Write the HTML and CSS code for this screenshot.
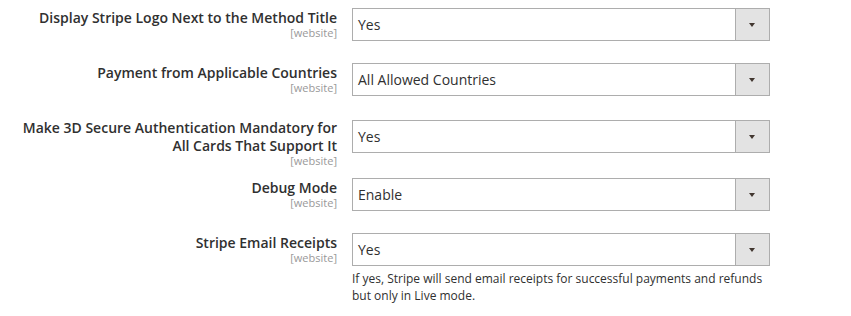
FILE: index.html
```html
<!DOCTYPE html>
<html lang="en">
<head>
<meta charset="utf-8">
<title>Stripe settings</title>
<link rel="stylesheet" href="styles.css">
</head>
<body>
<div class="config">
  <div class="row">
    <div class="label"><span class="title">Display Stripe Logo Next to the Method Title</span><span class="scope">[website]</span></div>
    <div class="control"><div class="select"><span class="value">Yes</span><span class="arrow"></span></div></div>
  </div>
  <div class="row">
    <div class="label"><span class="title">Payment from Applicable Countries</span><span class="scope">[website]</span></div>
    <div class="control"><div class="select"><span class="value">All Allowed Countries</span><span class="arrow"></span></div></div>
  </div>
  <div class="row row-tall">
    <div class="label"><span class="title">Make 3D Secure Authentication Mandatory for All Cards That Support It</span><span class="scope">[website]</span></div>
    <div class="control control-low"><div class="select"><span class="value">Yes</span><span class="arrow"></span></div></div>
  </div>
  <div class="row">
    <div class="label"><span class="title">Debug Mode</span><span class="scope">[website]</span></div>
    <div class="control"><div class="select"><span class="value">Enable</span><span class="arrow"></span></div></div>
  </div>
  <div class="row">
    <div class="label"><span class="title">Stripe Email Receipts</span><span class="scope">[website]</span></div>
    <div class="control">
      <div class="select"><span class="value">Yes</span><span class="arrow"></span></div>
      <p class="note">If yes, Stripe will send email receipts for successful payments and refunds but only in Live mode.</p>
    </div>
  </div>
</div>
</body>
</html>
```
FILE: styles.css
```css
html, body {
  margin: 0;
  padding: 0;
  background: #ffffff;
}
body {
  font-family: "Open Sans", "Liberation Sans", sans-serif;
  color: #303030;
}
.config {
  padding-top: 8px;
}
.row {
  display: flex;
  align-items: flex-start;
  margin-bottom: 22px;
}
.row-tall {
  margin-bottom: 23px;
}
.label {
  box-sizing: border-box;
  width: 337px;
  padding-left: 20px;
  flex: none;
  text-align: right;
  padding-top: 1px;
}
.title {
  display: block;
  font-size: 14px;
  font-weight: 600;
  line-height: 18px;
  color: #303030;
}
.scope {
  display: block;
  font-size: 11px;
  font-weight: 400;
  line-height: 12px;
  color: #999999;
  margin-bottom: -12px;
}
.control {
  margin-left: 15px;
  width: 418px;
  flex: none;
}
.control-low {
  padding-top: 2px;
}
.select {
  box-sizing: border-box;
  height: 33px;
  border: 1px solid #adadad;
  display: flex;
  align-items: stretch;
  background: #ffffff;
}
.value {
  flex: 1;
  padding-left: 5px;
  font-size: 14px;
  line-height: 31px;
  color: #303030;
}
.arrow {
  width: 33px;
  flex: none;
  background: #e3e3e3;
  border-left: 1px solid #adadad;
  position: relative;
}
.arrow::after {
  content: "";
  position: absolute;
  left: 13px;
  top: 14px;
  border-left: 3px solid transparent;
  border-right: 3px solid transparent;
  border-top: 4px solid #41362f;
}
.note {
  margin: 4px 0 0;
  font-size: 12px;
  line-height: 17px;
  color: #303030;
}
```
